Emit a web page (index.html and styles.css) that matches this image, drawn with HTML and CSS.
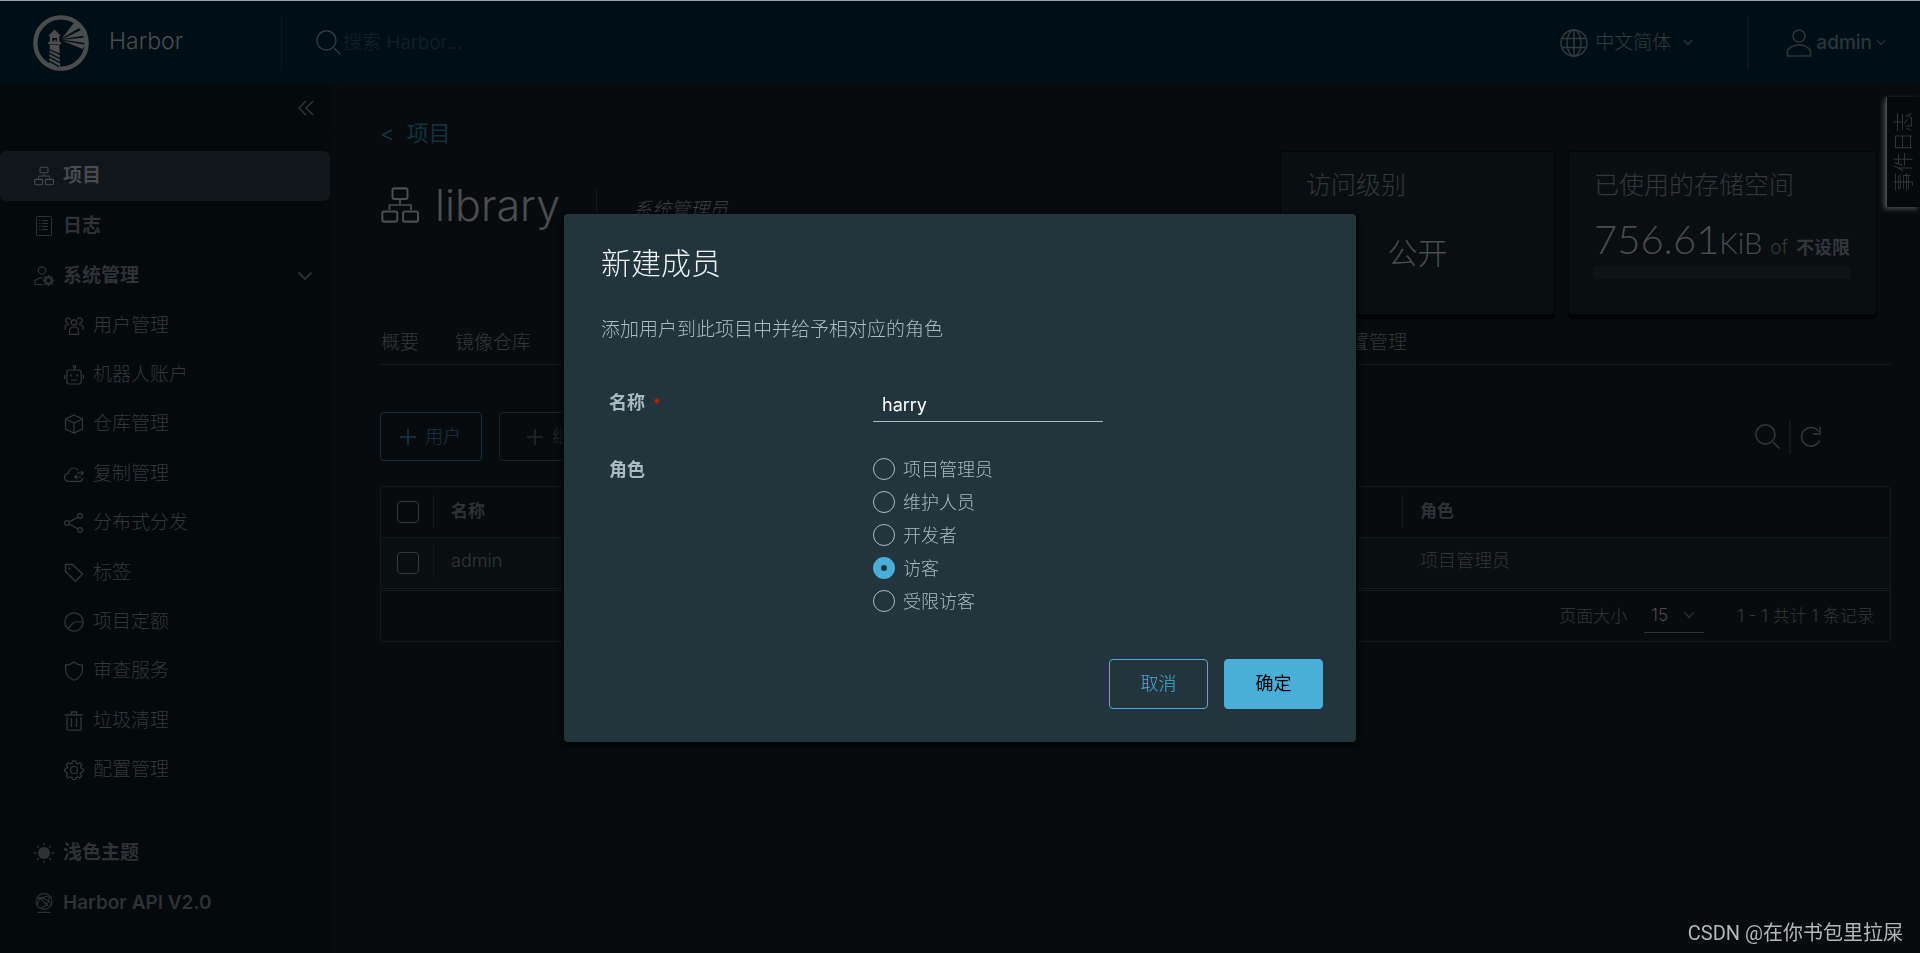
FILE: index.html
```html
<!DOCTYPE html>
<html lang="zh-CN">
<head>
<meta charset="utf-8">
<meta name="viewport" content="width=device-width, initial-scale=1">
<title>Harbor</title>
<link rel="stylesheet" href="styles.css">
</head>
<body>
<svg class="sprite" aria-hidden="true">
  <symbol id="i-org" viewBox="0 0 112 106"><g fill="none" stroke="currentColor" stroke-width="6"><rect x="34" y="4" width="44" height="31" rx="5"/><rect x="4" y="72" width="44" height="30" rx="5"/><rect x="65" y="72" width="44" height="30" rx="5"/><path d="M56 38v14M25 68V53h63v15" stroke-width="5"/></g></symbol>
  <symbol id="i-search" viewBox="0 0 24 24"><g fill="none" stroke="currentColor" stroke-width="1.4"><circle cx="10" cy="10" r="9.200"/><path d="M17.500 17.500l6 6"/></g></symbol>
  <symbol id="i-down" viewBox="0 0 16 10"><path d="M1.500 1.500L8 8l6.500-6.500" fill="none" stroke="currentColor" stroke-width="1.8"/></symbol>
  <symbol id="i-plus" viewBox="0 0 16 16"><path d="M8 0v16M0 8h16" fill="none" stroke="currentColor" stroke-width="1.500"/></symbol>
</svg>

<header class="header">
  <a class="brand" href="#">
    <svg class="logo" viewBox="0 0 166 166" aria-hidden="true">
      <defs><clipPath id="disc"><circle cx="83" cy="83" r="78"/></clipPath></defs>
      <circle cx="83" cy="83" r="76" fill="none" stroke="currentColor" stroke-width="13"/>
      <g clip-path="url(#disc)" fill="currentColor">
        <path d="M86 69L121 24l18 13zM87 71l58-27 8 17zM88 73l66-6v16zM88 76l66 12-7 13z"/>
        <path d="M64 43l19 19H45z"/>
        <path d="M50 62h28v19H50zM45 80h38v7H45z"/>
        <path d="M50 88h28l3 75H47z"/>
      </g>
      <path d="M57 68h14v10h-4v-5h-5v5h-5z" fill="#000f16"/>
      <path d="M49 103l31 14M48 113l33 17M47 124l34 18M47 136l30 17" stroke="#000f16" stroke-width="4"/>
    </svg>
    <span>Harbor</span>
  </a>
  <form class="search">
    <svg class="ico24" aria-hidden="true"><use href="#i-search"/></svg>
    <input type="search" placeholder="搜索 Harbor..." aria-label="搜索 Harbor">
  </form>
  <button class="lang" type="button">
    <svg class="globe" viewBox="0 0 28 28" aria-hidden="true"><g fill="none" stroke="currentColor" stroke-width="1.400"><circle cx="14" cy="14" r="13"/><ellipse cx="14" cy="14" rx="7" ry="13"/><path d="M14 1v26M2.500 9.500h23M2.500 18.500h23"/></g></svg>
    <span>中文简体</span>
    <svg class="caret" aria-hidden="true"><use href="#i-down"/></svg>
  </button>
  <button class="user" type="button">
    <svg class="avatar" viewBox="0 0 26 28" aria-hidden="true"><g fill="none" stroke="currentColor" stroke-width="1.500"><circle cx="13" cy="7" r="6"/><path d="M1.500 27v-5.500C4 18 8 16 13 16s9 2 11.500 5.500V27z"/></g></svg>
    <span>admin</span>
    <svg class="caret" aria-hidden="true"><use href="#i-down"/></svg>
  </button>
</header>

<div class="layout">
  <nav class="sidebar" aria-label="导航">
    <div class="collapse">
      <button type="button" aria-label="收起"><svg viewBox="0 0 16 16"><path d="M8 1L1 8l7 7M15 1L8 8l7 7" fill="none" stroke="currentColor" stroke-width="1.300"/></svg></button>
    </div>
    <div class="menu">
      <a class="item active" href="#"><svg class="ico"><use href="#i-org"/></svg><span>项目</span></a>
      <a class="item" href="#"><svg class="ico" viewBox="0 0 20 20"><g fill="none" stroke="currentColor"><rect x="2.500" y=".5" width="15" height="19" rx="1"/><path d="M5 4.500h1.500M8 4.500h6M5 7.500h1.500M8 7.500h6M5 10.500h1.500M8 10.500h6M5 13.500h1.500M8 13.500h6"/></g></svg><span>日志</span></a>
      <button class="item" type="button" aria-expanded="true"><svg class="ico" viewBox="0 0 20 20"><g fill="none" stroke="currentColor" stroke-width="1.200"><circle cx="8" cy="4.500" r="3.700"/><path d="M9 18.500H1v-3.700c2-2.300 4.500-3.300 8-3.200"/><circle cx="14.500" cy="14.500" r="3.200" stroke-width="2"/><path d="M14.500 9v2M14.500 18v2M9 14.500h2M18 14.500h2M10.600 10.600l1.400 1.400M17 17l1.400 1.400M10.600 18.400L12 17M17 12l1.400-1.400" stroke-width="1.800"/></g></svg><span>系统管理</span><svg class="chev"><use href="#i-down"/></svg></button>
    </div>
    <div class="submenu">
      <a class="item sub" href="#"><svg class="ico" viewBox="0 0 20 20"><g fill="none" stroke="currentColor" stroke-width="1.200"><circle cx="10" cy="6.500" r="2.700"/><path d="M5.500 18.300v-3.500c0-2.500 1.800-3.800 4.500-3.800s4.500 1.300 4.500 3.800v3.500zM6.600 3.800A2.500 2.500 0 1 0 4.500 7M13.400 3.800A2.500 2.500 0 1 1 15.500 7M1 14v-2.500C1 9.300 2.300 8.500 5.500 8.500M19 14v-2.500c0-2.200-1.300-3-4.500-3"/></g></svg><span>用户管理</span></a>
      <a class="item sub" href="#"><svg class="ico" viewBox="0 0 20 20"><g fill="none" stroke="currentColor" stroke-width="1.200"><rect x="2.800" y="5" width="14.400" height="14" rx="2.500"/><circle cx="10.500" cy="1.700" r="1.200"/><path d="M10.500 3v2M.5 10v4M19.500 10v4M7 15h6"/><path d="M6 10.500h1.600M12.400 10.500H14" stroke-width="1.800"/></g></svg><span>机器人账户</span></a>
      <a class="item sub" href="#"><svg class="ico" viewBox="0 0 20 20"><path d="M10 1l8.500 4v10L10 19l-8.500-4V5zM1.500 5L10 9l8.500-4M10 9v10" fill="none" stroke="currentColor" stroke-width="1.200"/></svg><span>仓库管理</span></a>
      <a class="item sub" href="#"><svg class="ico" viewBox="0 0 20 20"><path d="M18.500 14c0 2-1 3.300-3 3.300h-11C2 17.300.6 15.500.6 13.300s1.600-3.800 3.800-4C4.800 6 7 4 9.800 4c2 0 3.600 1 4.500 2.500M13 9h6M17 7l2.300 2L17 11M17 13h-6M13 11l-2.300 2 2.300 2" fill="none" stroke="currentColor" stroke-width="1.200"/></svg><span>复制管理</span></a>
      <a class="item sub" href="#"><svg class="ico" viewBox="0 0 20 20"><g fill="none" stroke="currentColor" stroke-width="1.300"><circle cx="3" cy="10" r="2.400"/><circle cx="16" cy="3" r="2.400"/><circle cx="16" cy="17" r="2.400"/><path d="M5.200 8.900L13.900 4.200M5.200 11.100l8.700 4.700"/></g></svg><span>分布式分发</span></a>
      <a class="item sub" href="#"><svg class="ico" viewBox="0 0 20 20"><path d="M1.500 1.500h7L18.500 11l-7 7.500-10-10z" fill="none" stroke="currentColor" stroke-width="1.300" stroke-linejoin="round"/><circle cx="5.500" cy="5.500" r="1" fill="currentColor"/></svg><span>标签</span></a>
      <a class="item sub" href="#"><svg class="ico" viewBox="0 0 20 20"><g fill="none" stroke="currentColor" stroke-width="1.200"><circle cx="10" cy="10" r="9.200"/><path d="M19 10h-9l-6.300 6.600"/></g></svg><span>项目定额</span></a>
      <a class="item sub" href="#"><svg class="ico" viewBox="0 0 20 20"><path d="M10 1c2.500 2 5.300 3 8.400 3.200V9c0 4.700-3.200 8-8.400 10.300C4.800 17 1.600 13.700 1.600 9V4.200C4.700 4 7.500 3 10 1z" fill="none" stroke="currentColor" stroke-width="1.200"/></svg><span>审查服务</span></a>
      <a class="item sub" href="#"><svg class="ico" viewBox="0 0 20 20"><path d="M1 4h18M3 6v12.200q0 1 1 1h12q1 0 1-1V6M7.500 4V1h5v3M7.500 7v9M12.500 7v9" fill="none" stroke="currentColor" stroke-width="1.300"/></svg><span>垃圾清理</span></a>
      <a class="item sub" href="#"><svg class="ico" viewBox="0 0 20 20"><g fill="none" stroke="currentColor" stroke-width="1.200" stroke-linejoin="round"><path d="M8.500.8h3l.5 2.400 1.800.8 2.100-1.400 2 2-1.400 2.100.8 1.800 2.100.5v2.600l-2.200.6-.7 1.800 1.300 2.100-2 2-2.100-1.300-1.800.7-.5 2.200H8.600L8 17.500l-1.800-.7-2.100 1.300-2-2 1.300-2.100-.7-1.800-2-.6V9l2.100-.5.8-1.800-1.400-2.100 2-2L6.300 4l1.800-.8z"/><circle cx="10" cy="10" r="3.500"/></g></svg><span>配置管理</span></a>
    </div>
    <div class="extra">
      <button class="item" type="button"><svg class="ico" viewBox="0 0 20 20"><circle cx="10" cy="10" r="6" fill="currentColor"/><path d="M10 0v2.500M10 17.500V20M0 10h2.500M17.500 10H20M3 3l1.700 1.700M15.300 15.300L17 17M3 17l1.700-1.700M15.300 4.700L17 3" stroke="currentColor" stroke-width="1.300"/></svg><span>浅色主题</span></button>
      <a class="item" href="#"><svg class="ico" viewBox="0 0 20 20"><g fill="none" stroke="currentColor" stroke-width="1.200"><circle cx="10" cy="8.500" r="7.900"/><path d="M3.500 19.300h13M3 5c5-1 8 0 13.500 5M15.500 3C15 9 12 13 7 15.500M3 12l3-7 8 8M6 5l8-2"/></g></svg><span>Harbor API V2.0</span></a>
    </div>
  </nav>

  <main class="main">
    <a class="crumb" href="#"><span>&lt;</span><span>项目</span></a>
    <section class="project">
      <div class="title">
        <svg class="title-ico" aria-hidden="true"><use href="#i-org"/></svg>
        <h1>library</h1>
        <em class="role">系统管理员</em>
      </div>
      <div class="cards">
        <article class="card access"><h2>访问级别</h2><p class="level">公开</p></article>
        <article class="card quota"><h2>已使用的存储空间</h2>
          <p class="usage"><span class="num">756.61</span><span class="unit">KiB</span><span class="of">of</span><b>不设限</b></p>
          <div class="bar"></div>
        </article>
      </div>
    </section>
    <nav class="tabs" aria-label="项目标签"><a href="#">概要</a><a href="#">镜像仓库</a><a class="last" href="#">配置管理</a></nav>
    <div class="toolbar">
      <button class="btn add" type="button"><svg><use href="#i-plus"/></svg>用户</button>
      <button class="btn group" type="button"><svg><use href="#i-plus"/></svg>组</button>
      <div class="tools">
        <button type="button" aria-label="搜索"><svg class="ico24"><use href="#i-search"/></svg></button>
        <button type="button" aria-label="刷新"><svg class="refresh" viewBox="0 0 22 22"><path d="M19.500 14.500A9.300 9.300 0 1 1 18.500 5.500M20 1v7h-7" fill="none" stroke="currentColor" stroke-width="1.500"/></svg></button>
      </div>
    </div>
    <div class="grid">
      <table>
        <thead><tr><th class="pick"><input type="checkbox" aria-label="全选"></th><th><div class="sep">名称</div></th><th class="rolecol"><div class="sep">角色</div></th></tr></thead>
        <tbody><tr><td class="pick"><input type="checkbox" aria-label="选择 admin"></td><td><div class="sep">admin</div></td><td class="rolecol"><div>项目管理员</div></td></tr></tbody>
      </table>
      <div class="pager">
        <label for="size">页面大小</label>
        <span class="selectbox"><select id="size"><option>15</option></select><svg><use href="#i-down"/></svg></span>
        <span class="count">1 - 1 共计 1 条记录</span>
      </div>
    </div>
  </main>
</div>

<button class="events" type="button">事件日志</button>

<div class="backdrop">
  <form class="modal" role="dialog" aria-labelledby="dlg">
    <h3 id="dlg">新建成员</h3>
    <p class="desc">添加用户到此项目中并给予相对应的角色</p>
    <div class="field">
      <label class="flabel" for="name">名称<span class="req">*</span></label>
      <input class="text" id="name" type="text" value="harry">
    </div>
    <div class="field roles" role="radiogroup" aria-labelledby="rl">
      <span class="flabel" id="rl">角色</span>
      <div class="radios">
        <label><input type="radio" name="r">项目管理员</label>
        <label><input type="radio" name="r">维护人员</label>
        <label><input type="radio" name="r">开发者</label>
        <label><input type="radio" name="r" checked>访客</label>
        <label><input type="radio" name="r">受限访客</label>
      </div>
    </div>
    <div class="actions"><button class="cancel" type="button">取消</button><button class="ok" type="submit">确定</button></div>
  </form>
</div>
<div class="watermark">CSDN @在你书包里拉屎</div>
</body>
</html>
```

FILE: styles.css
```css
* { box-sizing: border-box; }
body {
  margin: 0;
  min-height: 100vh;
  display: flex;
  flex-direction: column;
  background: #070b0e;
  color: #33373a;
  font: 300 19px/24px Inter, "Noto Sans CJK SC", sans-serif;
  overflow: hidden;
}
a { color: inherit; text-decoration: none; }
button, input, select { font: inherit; color: inherit; background: none; border: 0; padding: 0; margin: 0; }
h1, h2, h3, p { margin: 0; font-weight: 300; }
svg { display: block; flex: none; }
.sprite { position: absolute; width: 0; height: 0; }

/* header */
.header {
  display: flex;
  align-items: center;
  height: 84px;
  padding: 0 34px 0 33px;
  background: #000f16;
  border-top: 1px solid #8fa5ad;
}
.brand { display: flex; align-items: center; gap: 20px; width: 249px; height: 55px; font-size: 23px; color: #4a4c4d; border-right: 1px solid #0a181f; }
.brand span { padding-bottom: 3px; }
.logo { width: 56px; height: 56px; }
.search { display: flex; align-items: center; gap: 2px; flex: 1; padding: 0 0 0 34px; color: #2e3a40; }
.search input { width: 240px; outline: 0; font-size: 19px; }
.search input::placeholder { color: #11212a; opacity: 1; }
.ico24 { width: 25px; height: 25px; }
.lang { display: flex; align-items: center; gap: 7px; height: 55px; padding-right: 54px; color: #2f3b40; border-right: 2px solid #08161d; }
.globe { width: 28px; height: 28px; }
.caret { width: 10px; height: 7px; }
.lang .caret { margin-left: 5px; }
.user { display: flex; align-items: center; gap: 4px; padding-left: 37px; font-weight: 500; color: #2b363b; }
.avatar { width: 26px; height: 28px; }

/* sidebar */
.layout { display: flex; flex: 1; }
.sidebar { width: 330px; flex: none; background: #04090c; }
.collapse { display: flex; justify-content: flex-end; padding: 16px 16px 17px 0; border-bottom: 1px solid #070c0f; }
.collapse svg { width: 16px; height: 16px; }
.menu { display: grid; padding-top: 17px; }
.menu .item { height: 50px; }
.submenu { display: grid; grid-auto-rows: 1fr; min-height: 494px; }
.extra { padding-top: 33px; }
.item { display: flex; align-items: center; gap: 9px; width: 100%; height: 49px; padding: 0 17px 0 34px; border-radius: 6px; font-weight: 700; text-align: left; color: #2e3235; }
.extra .item { height: 50px; font-weight: 600; }
.item.active { background: #0f161c; color: #484a4b; }
.item.sub { padding-left: 64px; font-weight: 300; color: #33373a; }
.ico { width: 20px; height: 20px; }
.chev { width: 16px; height: 10px; margin-left: auto; }

/* project */
.main { flex: 1; padding: 37px 29px 0 50px; min-width: 0; }
.crumb { display: inline-flex; gap: 12px; height: 24px; color: #15303f; font-size: 22px; font-weight: 400; }
.project { display: flex; justify-content: space-between; padding-right: 14px; }
.title { display: flex; align-items: flex-start; padding: 36px 0 0 1px; color: #4a4c4d; }
.title-ico { width: 38px; height: 36px; margin-top: 4px; }
.title h1 { margin-left: 16px; padding-right: 36px; font-size: 43px; line-height: 44px; }
.role { height: 40px; margin-top: 6px; padding: 9px 0 0 36px; border-left: 1px solid #14191c; color: #3c3f41; }
.cards { display: flex; gap: 13px; padding-top: 4px; }
.card { height: 164px; background: #090e11; border: 1px solid #020506; border-radius: 4px; box-shadow: 0 4px 0 #020506; padding: 20px 25px; }
.card h2 { font-size: 25px; line-height: 26px; }
.access { width: 275px; }
.quota { width: 309px; }
.level { padding-top: 39px; font-size: 30px; line-height: 32px; text-align: center; color: #4a4c4d; }
.usage { display: flex; align-items: baseline; padding-top: 23px; line-height: 36px; white-space: nowrap; }
.num { font-family: Lato, sans-serif; font-size: 40px; color: #4a4c4d; }
.unit { font-family: Lato, sans-serif; font-size: 29px; color: #4a4c4d; margin-right: 8px; }
.of { margin-right: 8px; }
.usage b { font-size: 18px; font-weight: 700; }
.bar { height: 13px; background: #0e1316; }

/* tabs, toolbar */
.tabs { display: flex; gap: 36px; margin-top: 12px; padding: 4px 0 9px 1px; border-bottom: 1px solid #14191b; }
.tabs .last { margin-left: 764px; }
.toolbar { display: flex; gap: 17px; padding: 47px 69px 25px 0; }
.btn { display: flex; align-items: center; gap: 9px; height: 49px; border: 1px solid #1c2124; border-radius: 4px; font-size: 18px; color: #23282b; }
.btn svg { width: 16px; height: 16px; }
.add { padding: 0 20px 0 19px; border-color: #15303f; color: #183646; }
.group { padding: 0 27px; }
.tools { display: flex; align-items: center; margin-left: auto; }
.tools button { padding-right: 9px; }
.tools button + button { padding: 6px 0 6px 9px; border-left: 2px solid #12171a; }
.refresh { width: 22px; height: 22px; }

/* table */
.grid { border: 1px solid #14191b; border-radius: 4px; font-size: 18px; }
table { width: 100%; border-collapse: collapse; table-layout: fixed; }
th, td { height: 51px; padding: 0; text-align: left; border-bottom: 1px solid #14191b; }
th { height: 50px; font-size: 17px; font-weight: 700; color: #2e3235; }
td { padding-bottom: 4px; }
tbody { background: #090e11; }
.pick { width: 52px; padding: 0 0 0 16px; }
.rolecol { width: 488px; }
th > div, td > div { line-height: 33px; padding-left: 18px; }
th > .sep, td > .sep { border-left: 1px solid #14191b; padding-left: 17px; }
input[type="checkbox"] { appearance: none; display: block; width: 22px; height: 22px; border: 1px solid #34383a; border-radius: 4px; }
.pager { display: flex; align-items: center; justify-content: flex-end; height: 51px; margin-top: 1px; padding-right: 16px; border-top: 1px solid #14191b; font-size: 17px; }
.selectbox { display: flex; align-items: center; width: 60px; height: 34px; margin: 0 33px 0 17px; padding: 0 9px 0 7px; border-bottom: 1px solid #2e3235; color: #484a4b; }
.selectbox select { appearance: none; flex: 1; min-width: 0; }
.selectbox svg { width: 12px; height: 8px; color: #2e3235; }

/* overlays */
.events {
  position: fixed;
  top: 97px;
  right: 0;
  width: 34px;
  height: 110px;
  background: #06090c;
  border-right: 1px solid #4a4d4f;
  box-shadow: 2px -2px 5px #4a4d4f;
  writing-mode: vertical-rl;
  text-orientation: sideways;
  transform: rotate(180deg);
  font-size: 20px;
  line-height: 20px;
  text-align: center;
}
.backdrop { position: fixed; inset: 2px 0 0; display: flex; align-items: center; justify-content: center; }
.modal { width: 792px; padding: 32px 33px 33px 37px; background: #22343c; border-radius: 4px; box-shadow: 0 2px 4px 2px #020506; color: #acbac3; }
.modal h3 { font-size: 30px; line-height: 34px; color: #eff3f5; }
.desc { padding-top: 38px; }
.field { display: grid; grid-template-columns: 264px 1fr; padding-left: 8px; font-size: 18px; }
.flabel { font-weight: 700; }
.field .text { width: 230px; height: 36px; padding: 2px 0 0 9px; border-bottom: 1px solid #acbac3; color: #fff; font-weight: 400; outline: 0; }
.field:not(.roles) { margin-top: 44px; align-items: center; }
.req { margin-left: 8px; color: #c92100; font-size: 15px; font-weight: 400; }
.roles { margin-top: 31px; line-height: 33px; }
.radios label { display: flex; align-items: center; gap: 8px; }
input[type="radio"] { appearance: none; width: 22px; height: 22px; border: 1px solid #acbac3; border-radius: 50%; }
input[type="radio"]:checked { border: 8px solid #4aaed9; }
.actions { display: flex; justify-content: flex-end; gap: 16px; padding-top: 41px; }
.actions button { width: 99px; height: 50px; border: 1px solid #4aaed9; border-radius: 4px; font-size: 18px; color: #4aaed9; }
.actions .ok { background: #4aaed9; color: #000; font-weight: 400; }
.watermark { position: fixed; right: 17px; bottom: 8px; font: 400 20px/24px Roboto, "Noto Sans CJK SC", sans-serif; color: #b4b6b7; }
```
